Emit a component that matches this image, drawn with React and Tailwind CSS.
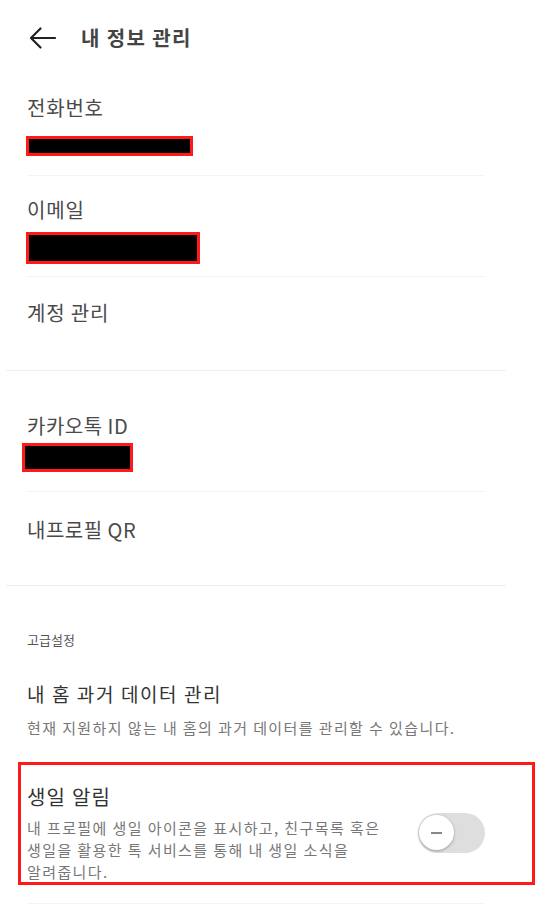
// 내 정보 관리 화면
import React from 'react'

const font = { fontFamily: '"Noto Sans CJK KR", "Noto Sans", sans-serif' }

function Masked({ className }) {
  return <div className={`border-[3px] border-[#ff1a1a] bg-black ${className}`} />
}

export default function App() {
  return (
    <div className="w-[560px] min-h-[907px] bg-white overflow-hidden" style={font}>
      {/* 헤더 */}
      <div className="h-[76px] flex items-center">
        <svg className="ml-[29px]" width="27" height="22" viewBox="0 0 27 22" fill="none">
          <path d="M26 11H2M11.5 1.5L2 11l9.5 9.5" stroke="#222" strokeWidth="2.2" strokeLinecap="round" strokeLinejoin="round" />
        </svg>
        <h1 className="ml-[25px] text-[20px] leading-[28px] font-bold text-[#444] tracking-[1.4px]">내 정보 관리</h1>
      </div>

      {/* 기본 정보 */}
      <div className="ml-[27px] w-[458px]">
        <div className="pt-[18px] pb-[19px] border-b border-[#f3f3f3]">
          <p className="text-[20px] leading-[28px] text-[#4a4a4a] tracking-[0.8px]">전화번호</p>
          <Masked className="mt-[14px] w-[167px] h-[20px] -ml-px" />
        </div>
        <div className="pt-[20px] pb-[12px] border-b border-[#f3f3f3]">
          <p className="text-[20px] leading-[28px] text-[#4a4a4a] tracking-[0.8px]">이메일</p>
          <Masked className="mt-[8px] w-[174px] h-[32px] -ml-px" />
        </div>
        <div className="pt-[22px] pb-[43px]">
          <p className="text-[20px] leading-[28px] text-[#4a4a4a] tracking-[0.8px]">계정 관리</p>
        </div>
      </div>
      <div className="ml-[6px] w-[500px] border-b border-[#efefef]" />

      <div className="ml-[27px] w-[458px]">
        <div className="pt-[41px] pb-[19px] border-b border-[#f3f3f3]">
          <p className="text-[20px] leading-[28px] text-[#4a4a4a] tracking-[0.5px]">카카오톡 ID</p>
          <Masked className="mt-[3px] w-[111px] h-[29px] -ml-[5px]" />
        </div>
        <div className="pt-[24px] pb-[41px]">
          <p className="text-[20px] leading-[28px] text-[#4a4a4a] tracking-[0.5px]">내프로필 QR</p>
        </div>
      </div>
      <div className="ml-[6px] w-[500px] border-b border-[#efefef]" />

      {/* 고급설정 */}
      <div className="ml-[27px] w-[458px]">
        <p className="pt-[44px] text-[13px] leading-[20px] text-[#555]">고급설정</p>
        <p className="mt-[30px] text-[19px] leading-[28px] text-[#333] tracking-[1.6px]">내 홈 과거 데이터 관리</p>
        <p className="mt-[9px] text-[15px] leading-[22px] text-[#777] tracking-[1.4px] whitespace-nowrap">
          현재 지원하지 않는 내 홈의 과거 데이터를 관리할 수 있습니다.
        </p>
      </div>

      <div className="ml-[18px] mt-[23px] w-[517px] h-[123px] border-[3px] border-[#ff1a1a] pl-[6px] pr-[47px] pt-[18px] flex items-center justify-between">
        <div className="self-start">
          <p className="text-[20px] leading-[28px] text-[#333] tracking-[1.2px]">생일 알림</p>
          <p className="mt-[6px] text-[15px] leading-[22px] text-[#777] tracking-[1.4px] whitespace-nowrap">
            내 프로필에 생일 아이콘을 표시하고, 친구목록 혹은
            <br />
            생일을 활용한 톡 서비스를 통해 내 생일 소식을
            <br />
            알려줍니다.
          </p>
        </div>
        <div className="w-[67px] h-[40px] rounded-full bg-[#dedede] flex items-center pl-px">
          <div className="w-[35px] h-[35px] rounded-full bg-white shadow-[0_1px_3px_rgba(0,0,0,0.3)] flex items-center justify-center">
            <div className="w-[11px] h-[2px] bg-[#888]" />
          </div>
        </div>
      </div>

      <div className="ml-[27px] mt-[18px] w-[458px] border-b border-[#f3f3f3]" />
    </div>
  )
}
